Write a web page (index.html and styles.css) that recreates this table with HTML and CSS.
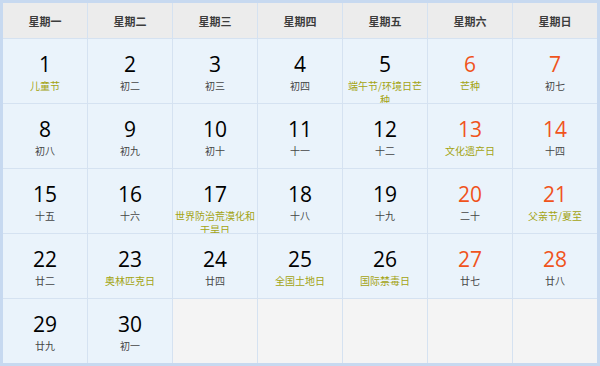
FILE: index.html
```html
<!DOCTYPE html>
<html lang="zh-CN">
<head>
<meta charset="utf-8">
<title>日历</title>
<link rel="stylesheet" href="styles.css">
</head>
<body>
<div class="calendar">
  <div class="head">星期一</div>
  <div class="head">星期二</div>
  <div class="head">星期三</div>
  <div class="head">星期四</div>
  <div class="head">星期五</div>
  <div class="head">星期六</div>
  <div class="head">星期日</div>

  <div class="day"><div class="num">1</div><div class="sub fest">儿童节</div></div>
  <div class="day"><div class="num">2</div><div class="sub">初二</div></div>
  <div class="day"><div class="num">3</div><div class="sub">初三</div></div>
  <div class="day"><div class="num">4</div><div class="sub">初四</div></div>
  <div class="day"><div class="num">5</div><div class="sub fest">端午节/环境日芒种</div></div>
  <div class="day weekend"><div class="num">6</div><div class="sub fest">芒种</div></div>
  <div class="day weekend"><div class="num">7</div><div class="sub">初七</div></div>

  <div class="day"><div class="num">8</div><div class="sub">初八</div></div>
  <div class="day"><div class="num">9</div><div class="sub">初九</div></div>
  <div class="day"><div class="num">10</div><div class="sub">初十</div></div>
  <div class="day"><div class="num">11</div><div class="sub">十一</div></div>
  <div class="day"><div class="num">12</div><div class="sub">十二</div></div>
  <div class="day weekend"><div class="num">13</div><div class="sub fest">文化遗产日</div></div>
  <div class="day weekend"><div class="num">14</div><div class="sub">十四</div></div>

  <div class="day"><div class="num">15</div><div class="sub">十五</div></div>
  <div class="day"><div class="num">16</div><div class="sub">十六</div></div>
  <div class="day"><div class="num">17</div><div class="sub fest">世界防治荒漠化和干旱日</div></div>
  <div class="day"><div class="num">18</div><div class="sub">十八</div></div>
  <div class="day"><div class="num">19</div><div class="sub">十九</div></div>
  <div class="day weekend"><div class="num">20</div><div class="sub">二十</div></div>
  <div class="day weekend"><div class="num">21</div><div class="sub fest">父亲节/夏至</div></div>

  <div class="day"><div class="num">22</div><div class="sub">廿二</div></div>
  <div class="day"><div class="num">23</div><div class="sub fest">奥林匹克日</div></div>
  <div class="day"><div class="num">24</div><div class="sub">廿四</div></div>
  <div class="day"><div class="num">25</div><div class="sub fest">全国土地日</div></div>
  <div class="day"><div class="num">26</div><div class="sub fest">国际禁毒日</div></div>
  <div class="day weekend"><div class="num">27</div><div class="sub">廿七</div></div>
  <div class="day weekend"><div class="num">28</div><div class="sub">廿八</div></div>

  <div class="day"><div class="num">29</div><div class="sub">廿九</div></div>
  <div class="day"><div class="num">30</div><div class="sub">初一</div></div>
  <div class="empty"></div>
  <div class="empty"></div>
  <div class="empty"></div>
  <div class="empty"></div>
  <div class="empty"></div>
</div>
</body>
</html>
```
FILE: styles.css
```css
html, body {
  margin: 0;
  padding: 0;
  background: #ffffff;
}

.calendar {
  box-sizing: border-box;
  width: 600px;
  height: 366px;
  border: 3px solid #c7d9f0;
  background: #d5e2f1;
  display: grid;
  grid-template-columns: repeat(7, 84px);
  grid-template-rows: 35px repeat(5, 64px);
  gap: 1px;
  font-family: "Noto Sans CJK SC", "Noto Sans", sans-serif;
}

.head {
  background: #ececec;
  color: #3c3c3c;
  font-size: 11px;
  font-weight: bold;
  display: flex;
  align-items: center;
  justify-content: center;
}

.day {
  background: #eaf3fb;
  overflow: hidden;
  text-align: center;
  padding: 11px 1px 0;
}

.empty {
  background: #f4f4f4;
}

.num {
  font-family: "Open Sans", "DejaVu Sans", sans-serif;
  font-size: 21px;
  line-height: 29px;
  color: #000000;
}

.weekend .num {
  color: #f0531c;
}

.sub {
  font-size: 10px;
  line-height: 14px;
  color: #454545;
}

.sub.fest {
  color: #a3a312;
}
```
